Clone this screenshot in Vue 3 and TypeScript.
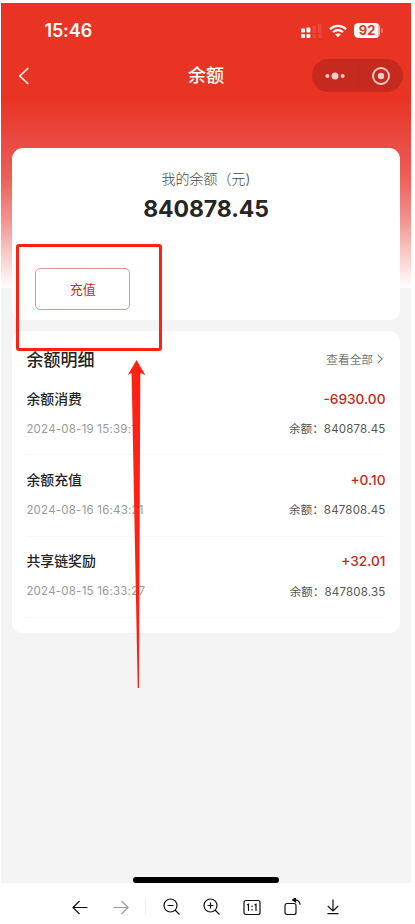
<script setup lang="ts">
interface BalanceRecord {
  title: string
  time: string
  amount: string
  balance: string
}

const records: BalanceRecord[] = [
  { title: '余额消费', time: '2024-08-19 15:39:11', amount: '-6930.00', balance: '840878.45' },
  { title: '余额充值', time: '2024-08-16 16:43:21', amount: '+0.10', balance: '847808.45' },
  { title: '共享链奖励', time: '2024-08-15 16:33:27', amount: '+32.01', balance: '847808.35' },
]
</script>

<template>
  <div class="viewer">
    <main class="phone">
      <header class="status">
        <span class="clock">15:46</span>
        <div class="indicators">
          <svg class="signal" width="22" height="16" viewBox="0 0 22 16">
            <g fill="#fff">
              <rect x="0" y="5.5" width="4" height="4" rx="1" />
              <rect x="0" y="11" width="4" height="4" rx="1" />
              <rect x="5.4" y="4.5" width="4" height="5" rx="1" />
              <rect x="5.4" y="11" width="4" height="4" rx="1" />
            </g>
            <g fill="#fff" opacity="0.1">
              <rect x="11.4" y="3" width="3.6" height="7" rx="1" />
              <rect x="11.4" y="11" width="3.6" height="4" rx="1" />
              <rect x="17" y="1" width="3.6" height="9" rx="1" />
              <rect x="17" y="11" width="3.6" height="4" rx="1" />
            </g>
          </svg>
          <svg class="wifi" width="18" height="14" viewBox="0 0 18 14">
            <g fill="none" stroke="#fff" stroke-width="2.3">
              <path d="M1 5.2C5.5 .7 12.5 .7 17 5.2" />
              <path d="M4.1 8.3C6.9 5.5 11.1 5.5 13.9 8.3" />
            </g>
            <path d="M9 13.3 6.2 10.5C7.8 9 10.2 9 11.8 10.5Z" fill="#fff" />
          </svg>
          <span class="battery">92</span>
          <i class="battery-cap"></i>
        </div>
      </header>

      <nav class="navbar">
        <svg class="back" width="12" height="18" viewBox="0 0 12 18">
          <path d="M10.3 1 1.8 9l8.5 8" fill="none" stroke="#fff" stroke-width="1.5" />
        </svg>
        <h1>余额</h1>
        <div class="capsule">
          <svg width="20" height="8" viewBox="0 0 20 8">
            <g fill="#f6cac6">
              <circle cx="2.4" cy="4" r="2" />
              <circle cx="10" cy="4" r="3.5" />
              <circle cx="17.6" cy="4" r="2" />
            </g>
          </svg>
          <i class="capsule-line"></i>
          <svg width="18" height="18" viewBox="0 0 18 18">
            <circle cx="9" cy="9" r="8" fill="none" stroke="#f6cac6" stroke-width="1.9" />
            <circle cx="9" cy="9" r="3.2" fill="#f6cac6" />
          </svg>
        </div>
      </nav>

      <section class="card summary">
        <p class="summary-label">我的余额（元)</p>
        <p class="summary-value">840878.45</p>
        <button class="recharge" type="button">充值</button>
      </section>

      <section class="card details">
        <div class="details-head">
          <h2>余额明细</h2>
          <a class="more">
            查看全部
            <svg width="6" height="10" viewBox="0 0 6 10">
              <path d="M.7 .8 5.2 5 .7 9.2" fill="none" stroke="#777" stroke-width="1.1" />
            </svg>
          </a>
        </div>
        <article v-for="record in records" :key="record.time" class="record">
          <div class="line">
            <span class="title">{{ record.title }}</span>
            <span class="amount">{{ record.amount }}</span>
          </div>
          <div class="line">
            <span class="time">{{ record.time }}</span>
            <span class="balance">余额：<b>{{ record.balance }}</b></span>
          </div>
        </article>
      </section>

      <i class="home-bar"></i>
    </main>

    <footer class="toolbar">
      <div class="history">
        <svg width="16" height="16" viewBox="0 0 16 16">
          <path d="M15.5 8.5H1M7.5 2 1 8.5 7.5 15" />
        </svg>
        <svg class="muted" width="16" height="16" viewBox="0 0 16 16">
          <path d="M.5 8.5H15M8.5 2 15 8.5 8.5 15" />
        </svg>
      </div>
      <i class="separator"></i>
      <div class="tools">
        <svg width="18" height="18" viewBox="0 0 18 18">
          <circle cx="7.5" cy="7.5" r="6.5" />
          <path d="M4.5 7.5h6M12 12l4.5 4.5" />
        </svg>
        <svg width="18" height="18" viewBox="0 0 18 18">
          <circle cx="7.5" cy="7.5" r="6.5" />
          <path d="M4.5 7.5h6M7.5 4.5v6M12 12l4.5 4.5" />
        </svg>
        <svg width="18" height="18" viewBox="0 0 18 18">
          <rect x="1" y="2.5" width="16" height="14" rx="2" />
          <path d="M4 7 5.5 6.2V13M11.5 7 13 6.2V13M9 7.5v1.5M9 11v1.5" />
        </svg>
        <svg width="18" height="18" viewBox="0 0 18 18">
          <rect x="1" y="5.5" width="11" height="11" rx="2" />
          <path d="M10 1.8c4 0 6 1.7 6 5" />
          <path d="M11.5 0v3.8L8.6 1.9Z" fill="#111" />
        </svg>
        <svg width="18" height="18" viewBox="0 0 18 18">
          <path d="M9 1.5v11.5M3.8 8l5.2 5 5.2-5M3.500 15.700h11" />
        </svg>
      </div>
    </footer>

    <div class="highlight"></div>
    <svg class="arrow" width="20" height="330" viewBox="0 0 20 330">
      <path d="M9.500 1 18.300 16 13.300 14 12 329h-1.300L4.600 14 .8 16Z" fill="#ff2113" />
    </svg>
  </div>
</template>

<style>
body {
  margin: 0;
  background: #fff;
}
</style>

<style scoped>
* {
  box-sizing: border-box;
}

.viewer {
  position: relative;
  width: 415px;
  height: 924px;
  padding: 3px 4px 0 1px;
  overflow: hidden;
  background: #fff;
  font-family: Inter, 'Noto Sans CJK SC', sans-serif;
  color: #252525;
}

h1,
h2,
p {
  margin: 0;
}

svg {
  display: block;
  flex: none;
}

.phone {
  display: flex;
  flex-direction: column;
  height: 880px;
  padding: 0 10.600px;
  background: linear-gradient(#e93424 0, #e93424 97px, #ea4f48 147px, #ec5f58 174px, #f29490 218px, #f9cecc 253px, #fff 285px) 0 0 / 100% 285px no-repeat #f4f4f4;
}

.status {
  display: flex;
  align-items: center;
  justify-content: space-between;
  height: 55px;
  padding: 0 17.900px 0 32.800px;
}

.clock {
  color: #fff;
  font-size: 18px;
  font-weight: 600;
  letter-spacing: -0.1px;
}

.indicators {
  display: flex;
  align-items: center;
}

.signal {
  margin-top: 1px;
}

.wifi {
  margin-left: 6px;
}

.battery {
  width: 26px;
  height: 15px;
  margin-left: 7.500px;
  border-radius: 4.500px;
  background: linear-gradient(90deg, #fff 92%, #f6b0aa 92%);
  color: #e93424;
  font-size: 13px;
  font-weight: 700;
  line-height: 15px;
  text-align: center;
}

.battery-cap {
  width: 1.500px;
  height: 5px;
  margin-left: 1px;
  border-radius: 0 2px 2px 0;
  background: #f07a70;
}

.navbar {
  display: grid;
  grid-template-columns: 91px 1fr 91px;
  align-items: center;
  height: 35px;
  margin: 0 -2.400px 0 -2.600px;
}

.back {
  margin-left: 9px;
}

h1 {
  padding-top: 1px;
  color: #fff;
  font-size: 18px;
  font-weight: 500;
  line-height: 34px;
  text-align: center;
}

.capsule {
  display: flex;
  align-items: center;
  gap: 13px;
  height: 33px;
  padding: 0 13px;
  border-radius: 17px;
  background: #c6291d;
}

.capsule-line {
  width: 1px;
  height: 21px;
  background: #bd281d;
}

.card {
  border-radius: 11px;
  background: #fff;
}

.summary {
  height: 172px;
  margin-top: 55px;
  padding: 20px 23.700px 0;
}

.summary-label {
  color: #444;
  font-size: 14px;
  font-weight: 300;
  line-height: 22px;
  text-align: center;
}

.summary-value {
  margin-top: 4px;
  font-size: 23px;
  font-weight: 700;
  line-height: 30px;
  letter-spacing: -0.1px;
  text-align: center;
}

.recharge {
  display: block;
  width: 95px;
  height: 42px;
  margin-top: 44px;
  padding: 0;
  border: 1px solid #dc9790;
  border-radius: 5px;
  background: transparent;
  color: #d2271c;
  font: 400 13px/40px Inter, 'Noto Sans CJK SC', sans-serif;
}

.details {
  height: 302px;
  margin-top: 11px;
  padding: 12px 14.900px 0 14.800px;
}

.details-head,
.line {
  display: flex;
  align-items: center;
  justify-content: space-between;
}

.details-head {
  height: 31px;
}

h2 {
  font-size: 17px;
  font-weight: 500;
}

.more {
  display: flex;
  align-items: center;
  gap: 4px;
  padding-right: 2.500px;
  color: #777;
  font-size: 11.700px;
}

.record {
  height: 81.300px;
  padding-top: 10px;
  border-bottom: 1px solid #f8f8f8;
}

.line {
  height: 27px;
}

.line + .line {
  margin-top: 3px;
}

.title {
  font-size: 13.900px;
  font-weight: 500;
}

.amount {
  padding-top: 2px;
  color: #c8241a;
  font-size: 13.700px;
  font-weight: 500;
}

.time {
  padding-top: 2px;
  color: #999;
  font-size: 11.500px;
  letter-spacing: 0.220px;
}

.balance {
  color: #555;
  font-size: 11.700px;
}

.balance b {
  font-size: 11.500px;
  font-weight: 400;
  letter-spacing: 0.200px;
}

.home-bar {
  width: 146px;
  height: 6px;
  margin: auto auto 0 121.400px;
  border-radius: 3px;
  background: #000;
}

.toolbar {
  display: flex;
  align-items: center;
  height: 41px;
  padding: 7px 0 0 71px;
}

.toolbar svg {
  fill: none;
  stroke: #111;
  stroke-width: 1.200;
}

.toolbar .muted {
  stroke: #999;
}

.history {
  display: flex;
  gap: 25px;
}

.separator {
  width: 1px;
  height: 16px;
  margin: 0 17px 0 16px;
  background: #eee;
}

.tools {
  display: flex;
  gap: 22.200px;
}

.highlight {
  position: absolute;
  top: 244px;
  left: 16px;
  width: 146px;
  height: 107px;
  border: 3px solid #ff2113;
  border-radius: 3px;
}

.arrow {
  position: absolute;
  top: 359px;
  left: 127px;
}
</style>
